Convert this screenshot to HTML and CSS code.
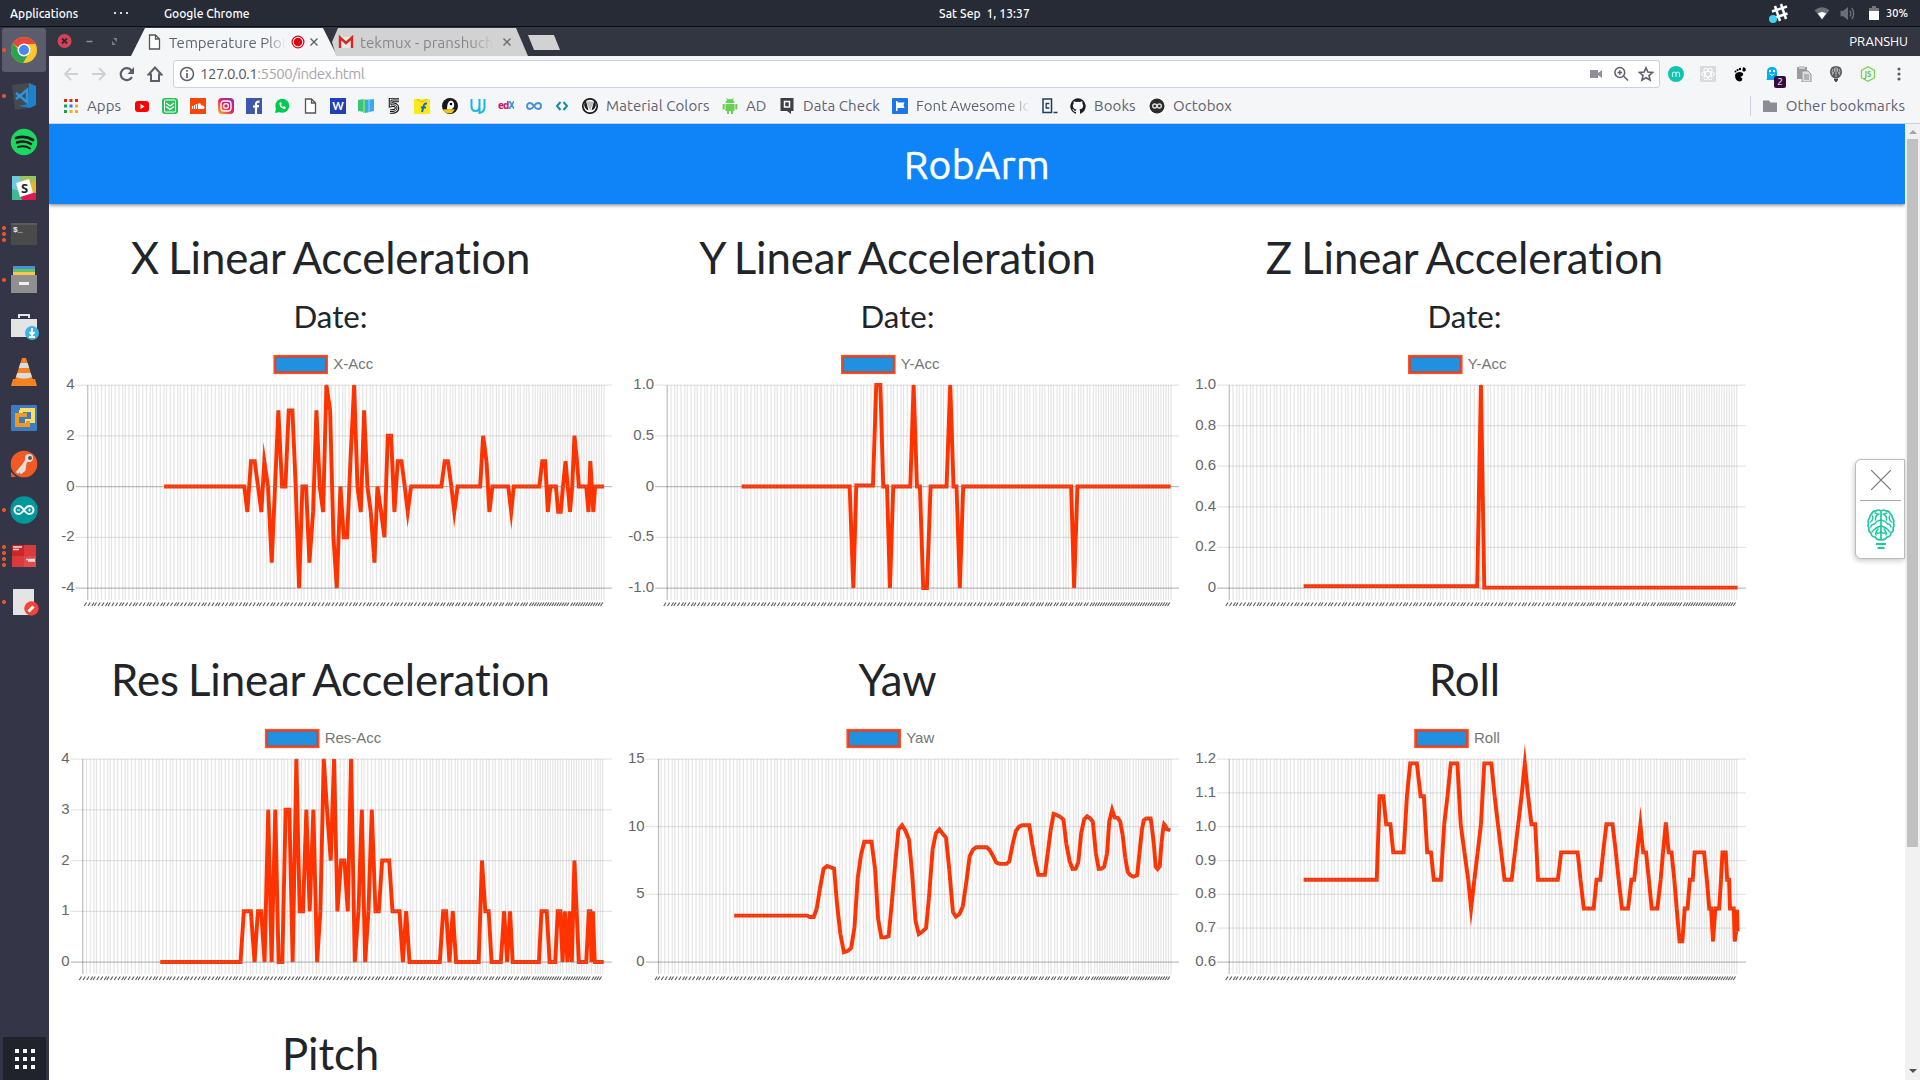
FILE: index.html
```html
<!DOCTYPE html>
<html lang="en">
<head>
<meta charset="utf-8">
<title>Temperature Plot</title>
<link rel="stylesheet" href="styles.css">
</head>
<body>
<div class="desktop">
  <header class="panel">
    <span class="panel-apps">Applications</span>
    <span class="panel-dots"><i></i><i></i><i></i></span>
    <span class="panel-app">Google Chrome</span>
    <span class="panel-clock">Sat Sep&nbsp; 1, 13:37</span>
    <div class="panel-tray">
      <svg class="tray-slack" viewBox="0 0 20 20"><g stroke="#fff" stroke-width="2.500"><path d="M6 3l5 15M12 1l5 15M3 8.500l15-5M3.500 15.500l15-5"/></g><circle cx="4" cy="16" r="4" fill="#3fd4f4"/></svg>
      <svg class="tray-wifi" viewBox="0 0 16 14"><path d="M0 3.500Q8-3 16 3.500L8 14z" fill="#6c6f78"/><path d="M3.500 7Q8 3.500 12.500 7L8 13z" fill="#fff"/></svg>
      <svg class="tray-volume" viewBox="0 0 16 16"><path d="M0 5h3l5-4v14l-5-4H0z" fill="#6c6f78"/><path d="M10 5q2 3 0 6M12 2q4 6 0 12" fill="none" stroke="#6c6f78" stroke-width="1.500"/></svg>
      <svg class="tray-battery" viewBox="0 0 10 14"><path d="M3 0h4v2h3v12H0V2h3z" fill="#74777f"/><path d="M0 5h10v9H0z" fill="#fff"/></svg>
      <span class="tray-percent">30%</span>
    </div>
  </header>

  <aside class="dock">
    <div class="dock-item active one"><svg viewBox="0 0 32 32"><circle cx="16" cy="16" r="13" fill="#fbc52d"/><path d="M16 16L4.500 9.900A13 13 0 0 1 27.500 9.900H16z" fill="#e5483b"/><path d="M16 16h-4.500L4.600 9.700A13 13 0 0 0 15 29l6-10z" fill="#2ba24c"/><circle cx="16" cy="16" r="6.500" fill="#fff"/><circle cx="16" cy="16" r="5" fill="#4586f3"/></svg></div>
    <div class="dock-item one"><svg viewBox="0 0 32 32"><path d="M4 5l17-2 7 3v19l-6 3-15 2z" fill="#444a50"/><path d="M21 3l7 3v19l-6 3-11-2 9-2z" fill="#1b82cf"/><path d="M8 13l11 9V10L8 19" fill="none" stroke="#2d93dc" stroke-width="2.500"/></svg></div>
    <div class="dock-item"><svg viewBox="0 0 32 32"><circle cx="16" cy="16" r="13.200" fill="#1ed760"/><g fill="none" stroke="#191b20" stroke-linecap="round"><path d="M8 12q9-3 17 2" stroke-width="2.800"/><path d="M9 16.500q8-2.500 14 1.500" stroke-width="2.400"/><path d="M10 21q7-2 12 1.500" stroke-width="2"/></g></svg></div>
    <div class="dock-item"><svg viewBox="0 0 32 32"><path d="M4 4h8l4 12-12 5z" fill="#6ecadc"/><path d="M12 4h16v7l-14 5z" fill="#9bc25b"/><path d="M28 9v15l-7-1-3-11z" fill="#e9b32a"/><path d="M28 21v7H13l2-8z" fill="#de1a53"/><path d="M4 17l8 2 2 9H4z" fill="#3eb991"/><path d="M8 11l13-4 4 14-13 4z" fill="#fff"/><text x="16.500" y="21" class="ic-s">S</text></svg></div>
    <div class="dock-item three"><svg viewBox="0 0 32 32"><path d="M3 5h26v22H3z" fill="#4a4a4a"/><path d="M3 5h26v2H3z" fill="#5b5b5b"/><text x="5" y="14" class="ic-term">$_</text></svg></div>
    <div class="dock-item one"><svg viewBox="0 0 32 32"><path d="M5 2h22v4H5z" fill="#4d8fd6"/><path d="M5 5h22v4H5z" fill="#5fc36e"/><path d="M5 8h22v4H5z" fill="#fac64b"/><path d="M3 11h26v18H3z" fill="#8f8f8f"/><path d="M11 18h10v3H11z" fill="#eee"/></svg></div>
    <div class="dock-item"><svg viewBox="0 0 32 32"><path d="M11 8V5h10v3" fill="none" stroke="#e6e6e6" stroke-width="2"/><path d="M3 9h26v18H3z" fill="#e4e4e4"/><circle cx="24" cy="23" r="7" fill="#3fb0e8"/><path d="M24 18v6M21.500 22l2.500 3 2.500-3M21 27h6" fill="none" stroke="#fff" stroke-width="1.800"/></svg></div>
    <div class="dock-item"><svg viewBox="0 0 32 32"><path d="M5 23h22l2 7H3z" fill="#f58220"/><path d="M14 2h4l7 22q-9 4-18 0z" fill="#f58220"/><path d="M12.400 7h7.200l1.600 5H10.800zM9.300 17h13.400l1.200 4q-8 3-16 0z" fill="#d8dde0"/></svg></div>
    <div class="dock-item"><svg viewBox="0 0 32 32"><rect x="3" y="3" width="26" height="26" rx="1" fill="#3d7cc0"/><path d="M12 8h13v11h-8M13 12V8" fill="none" stroke="#fadf66" stroke-width="4"/><path d="M19 13H9v10h11v-4" fill="none" stroke="#f39a1d" stroke-width="4"/></svg></div>
    <div class="dock-item"><svg viewBox="0 0 32 32"><circle cx="16" cy="16" r="13.300" fill="#f15a24"/><path d="M3 24v5h5z" fill="#f15a24"/><circle cx="21" cy="10" r="4" fill="#ddd"/><circle cx="22" cy="10" r="2" fill="#555"/><path d="M19 12l-5 7-5 6M17 15l-1 7-4 3" fill="none" stroke="#e8e0dc" stroke-width="3"/></svg></div>
    <div class="dock-item one"><svg viewBox="0 0 32 32"><circle cx="16" cy="16" r="13.700" fill="#00979d"/><g fill="none" stroke="#fff" stroke-width="2"><path d="M16 16q-3-4-5.500-4a4 4 0 0 0 0 8q2.500 0 5.500-4t5.500-4a4 4 0 0 1 0 8q-2.500 0-5.500-4z"/><path d="M9 16h3M20 16h3M21.500 14.500v3" stroke-width="1.200"/></g></svg></div>
    <div class="dock-item four"><svg viewBox="0 0 32 32"><path d="M4 5h24v22H4z" fill="#d93a3a"/><path d="M4 5h12v11H4z" fill="#cc2429"/><path d="M16 16h12v11H16z" fill="#e04a4a"/><path d="M5 7h9M5 9.500h6M18 19.500h9M20 21h7" stroke="#f4d9d9" stroke-width="1.400"/></svg></div>
    <div class="dock-item one"><svg viewBox="0 0 32 32"><path d="M5 3h21v26H5z" fill="#e4e4e4"/><circle cx="23.500" cy="22.500" r="7.200" fill="#f04437"/><path d="M20.500 25.500l5-5" stroke="#fff" stroke-width="3"/></svg></div>
    <div class="dock-grid"><svg viewBox="0 0 20 20" fill="#fff"><path d="M0 0h4v4H0zM8 0h4v4H8zM16 0h4v4h-4zM0 8h4v4H0zM8 8h4v4H8zM16 8h4v4h-4zM0 16h4v4H0zM8 16h4v4H8zM16 16h4v4h-4z"/></svg></div>
  </aside>

  <main class="browser">
    <div class="tabstrip">
      <div class="window-buttons">
        <svg viewBox="0 0 70 16"><circle cx="7.500" cy="8" r="7" fill="#d9415a"/><path d="M5 5.500l5 5M10 5.500l-5 5" stroke="#3a2630" stroke-width="1.800"/><path d="M29.500 8.500h6" stroke="#878a94" stroke-width="1.600"/><path d="M55 8v4h4zM56 5h4v4z" fill="#787b86"/></svg>
      </div>
      <div class="tab tab-active">
        <svg class="tab-icon" viewBox="0 0 16 16"><path d="M3.500 1h6l4 4v10h-10zM9.500 1v4h4" fill="#fff" stroke="#555" stroke-width="1.300"/></svg>
        <span class="tab-title">Temperature Plot</span>
        <svg class="tab-rec" viewBox="0 0 14 14"><circle cx="7" cy="7" r="5.900" fill="none" stroke="#d80a16" stroke-width="1.200"/><circle cx="7" cy="7" r="4.300" fill="#d80a16"/></svg>
        <svg class="tab-close" viewBox="0 0 8 8"><path d="M.5.500l7 7M7.500.500l-7 7" stroke="#5f6368" stroke-width="1.400"/></svg>
      </div>
      <div class="tab tab-second">
        <svg class="tab-icon" viewBox="0 0 16 16"><path d="M1 3h14v11H1z" fill="#e7e7e7"/><path d="M2 14V3.500l6 5.500 6-5.500V14" fill="none" stroke="#d5291f" stroke-width="2.400"/></svg>
        <span class="tab-title">tekmux - pranshuch</span>
        <svg class="tab-close" viewBox="0 0 8 8"><path d="M.5.500l7 7M7.500.500l-7 7" stroke="#6b6b6f" stroke-width="1.400"/></svg>
      </div>
      <div class="new-tab"></div>
      <span class="profile">PRANSHU</span>
    </div>

    <div class="toolbar">
      <svg class="nav" viewBox="0 0 16 16"><path d="M15 8H2M8 2L2 8l6 6" fill="none" stroke="#cfd0d3" stroke-width="1.800"/></svg>
      <svg class="nav" viewBox="0 0 16 16"><path d="M1 8h13M8 2l6 6-6 6" fill="none" stroke="#cfd0d3" stroke-width="1.800"/></svg>
      <svg class="nav" viewBox="0 0 16 16"><path d="M13 11a6 6 0 1 1-.5-6.500" fill="none" stroke="#5c5f6b" stroke-width="2.200"/><path d="M15 1v7H8.500z" fill="#5c5f6b"/></svg>
      <svg class="nav" viewBox="0 0 16 16"><path d="M8 1.500L1.500 8.500H4V15h8V8.500h2.500z" fill="none" stroke="#5c5f6b" stroke-width="2"/></svg>
      <div class="omnibox">
        <svg class="info" viewBox="0 0 16 16"><circle cx="8" cy="8" r="6.500" fill="none" stroke="#5c5f6b" stroke-width="1.500"/><path d="M8 7v5M8 4v1.800" stroke="#5c5f6b" stroke-width="1.700"/></svg>
        <span class="url"><b>127.0.0.1</b>:5500/index.html</span>
        <svg class="box-icon" viewBox="0 0 16 16"><path d="M2 4h8v8H2zM10 7l4-3v8l-4-3z" fill="#8c8f9c"/></svg>
        <svg class="box-icon" viewBox="0 0 16 16"><circle cx="6.800" cy="6.500" r="4.900" fill="none" stroke="#5c5f6b" stroke-width="1.500"/><path d="M4.500 6.500h4.600M6.800 4.200v4.600M10.500 10l4.500 4.500" stroke="#5c5f6b" stroke-width="1.500"/></svg>
        <svg class="box-icon" viewBox="0 0 16 16"><path d="M8 1.800l1.900 4.300 4.600.4-3.500 3.100 1.100 4.600L8 11.800l-4.100 2.400L5 9.600 1.500 6.500l4.600-.4z" fill="none" stroke="#5c5f6b" stroke-width="1.600"/></svg>
      </div>
      <div class="extensions">
        <svg viewBox="0 0 16 16"><circle cx="8" cy="8" r="8" fill="#10c4ae"/><path d="M4.500 11V6.500M4.500 8q0-2 1.700-2T8 8v3M8 8q0-2 1.700-2T11.500 8v3" fill="none" stroke="#d9f7f2" stroke-width="1.100"/></svg>
        <svg viewBox="0 0 16 16"><path d="M0 0h16v16H0z" fill="#d9dadb"/><g fill="none" stroke="#fff"><ellipse cx="8" cy="8" rx="6.500" ry="2.500"/><ellipse cx="8" cy="8" rx="6.500" ry="2.500" transform="rotate(60 8 8)"/><ellipse cx="8" cy="8" rx="6.500" ry="2.500" transform="rotate(120 8 8)"/></g></svg>
        <svg viewBox="0 0 16 16"><path d="M11.500 1q3 1 2 4-3 1.500-3-1 0-2 1-3z"/><circle cx="8" cy="3" r="1.200"/><circle cx="5.600" cy="4" r="1.100"/><circle cx="3.500" cy="5.500" r="1"/><path d="M3 9q1-3 5-3 4 .5 3 3-1 2-2.500 1.500 0 1 1.500 1.500 1 3-2 3.500Q3 15 3 9z"/></svg>
        <span class="ghost"><svg viewBox="0 0 16 16"><path d="M3 13V6q0-5 5-5t5 5v6l2 2H2z" fill="#00aef0"/><circle cx="6" cy="5" r="1.200" fill="#fff"/><circle cx="10" cy="5" r="1.200" fill="#fff"/><path d="M5.500 8q2.500 2.500 5 0" stroke="#fff" fill="none"/></svg><span class="badge">2</span></span>
        <svg viewBox="0 0 16 16"><path d="M1 1h10v12H1z" fill="#9b9b9b"/><path d="M3 0h6v3H3z" fill="#ccc"/><path d="M6 5h6l3 3v8H6z" fill="#ddd" stroke="#999"/><path d="M8 9h5M8 11h5M8 13h5" stroke="#888"/></svg>
        <svg viewBox="0 0 16 16"><path d="M8 0q6 0 6 6 0 3.500-3.500 6H5.500Q2 9.500 2 6q0-6 6-6z" fill="#5b5b5b"/><path d="M8 1v10M5 3q-2 3 0 5M11 3q2 3 0 5M6.500 2v3L4 9M9.500 2v3L12 9" stroke="#ccc" fill="none" stroke-width=".8"/><path d="M6 12.500h4v1.500L8.500 16h-1L6 14z" fill="#444"/></svg>
        <svg viewBox="0 0 16 16"><path d="M8 .7l6.500 3.700v7.300L8 15.300l-6.500-3.600V4.400z" fill="#f5f6f8" stroke="#7fd04b" stroke-width="1.300"/><text x="8" y="11" class="ic-js">JS</text></svg>
        <svg class="menu-dots" viewBox="0 0 4 16" fill="#5c5f6b"><circle cx="2" cy="3" r="1.600"/><circle cx="2" cy="8" r="1.600"/><circle cx="2" cy="13" r="1.600"/></svg>
      </div>
    </div>

    <nav class="bookmarks">
      <svg class="apps-icon" viewBox="0 0 16 16"><path d="M1 1h3v3H1zM6.500 1h3v3h-3zM12 1h3v3h-3z" fill="#e2231a"/><path d="M1 6.500h3v3H1zM1 12h3v3H1z" fill="#12a05c"/><path d="M6.500 6.500h3v3h-3z" fill="#2a7af3"/><path d="M12 6.500h3v3h-3zM6.500 12h3v3h-3zM12 12h3v3h-3z" fill="#f9ad1b"/></svg>
      <span class="label w-apps">Apps</span>
      <svg viewBox="0 0 16 16"><rect x="1" y="3" width="14" height="11" rx="3" fill="#f00"/><path d="M6.500 6v5l4-2.500z" fill="#fff"/></svg>
      <svg viewBox="0 0 16 16"><rect width="16" height="16" rx="3" fill="#2bc15a"/><rect x="2.500" y="2" width="11" height="12" rx="1" fill="none" stroke="#fff"/><path d="M4 5l4 3 4-3M4 8.500l4 3 4-3" fill="none" stroke="#fff" stroke-width="1.300"/></svg>
      <svg viewBox="0 0 16 16"><path d="M0 0h16v16H0z" fill="#fd4505"/><path d="M2.500 8v3M4.500 7v4M6.500 6v5" stroke="#fff" stroke-width="1.200"/><path d="M8 5.500q3-1 3.500 2 3-.5 3 2 0 1.500-1.500 1.500H8z" fill="#fff"/></svg>
      <svg viewBox="0 0 16 16"><defs><linearGradient id="insta" x1="0" y1="1" x2="1" y2="0"><stop offset="0" stop-color="#fdb72e"/><stop offset=".5" stop-color="#ee1c5d"/><stop offset="1" stop-color="#7a2fd0"/></linearGradient></defs><rect width="16" height="16" rx="4" fill="url(#insta)"/><rect x="3" y="3" width="10" height="10" rx="3" fill="none" stroke="#fff" stroke-width="1.300"/><circle cx="8" cy="8" r="2.400" fill="none" stroke="#fff" stroke-width="1.300"/></svg>
      <svg viewBox="0 0 16 16"><path d="M0 0h16v16H0z" fill="#4056a8"/><path d="M10 16V8h3M7 8.500h5.500M10 9V6q0-2.500 3.500-2.300" fill="none" stroke="#fff" stroke-width="2.200"/></svg>
      <svg viewBox="0 0 16 16"><circle cx="8.300" cy="7.700" r="7" fill="#00c853"/><path d="M1 15l1-5 4 4z" fill="#00c853"/><path d="M5.500 5q-.5 5 5.500 6l1-1.500-2-1.300-1 .8q-1.500-.8-2-2l.8-1L7 4z" fill="#fff"/></svg>
      <svg viewBox="0 0 16 16"><path d="M3.500 1h6l4 4v10h-10zM9.500 1v4h4" fill="#fff" stroke="#555" stroke-width="1.300"/></svg>
      <svg viewBox="0 0 16 16"><path d="M0 0h16v16H0z" fill="#2140b8"/><text x="8" y="12" class="ic-w">W</text></svg>
      <svg viewBox="0 0 16 16"><path d="M0 2l6-1v13l-6-1z" fill="#3cc47c"/><path d="M5 1l6 1v12l-6 1z" fill="#6fe06a"/><path d="M7 2l9-1v12l-9 2z" fill="#3fa8ec"/><path d="M11 2v12" stroke="#8fd0f8"/></svg>
      <svg viewBox="0 0 16 16"><path d="M13 2H5v5q6-1 6 3t-7 3.500" fill="none" stroke="#111" stroke-width="4.500"/><path d="M13 2H5v5q6-1 6 3t-7 3.500" fill="none" stroke="#fff" stroke-width="2.400"/><path d="M13 2H5v5q6-1 6 3t-7 3.500" fill="none" stroke="#111" stroke-width="1"/></svg>
      <svg viewBox="0 0 16 16"><path d="M0 1h16v15H0z" fill="#ffe81a"/><path d="M8 14l2-7q.8-2 3-1.500M7 9.500h5" fill="none" stroke="#1769c9" stroke-width="2"/><path d="M3 1q5 5 10 0" fill="none" stroke="#d9b800"/></svg>
      <svg viewBox="0 0 16 16"><circle cx="8" cy="8" r="8" fill="#171717"/><path d="M5 11q0-8 4-8.500 4 1 3 6.500l-2 2z" fill="#fff"/><path d="M1 11.500q7-1 12 0l-3 3.500q-7 1.500-9-3.500z" fill="#f0c417"/><circle cx="9" cy="6" r="1.300"/></svg>
      <svg viewBox="0 0 16 16"><path d="M1.500 1v7q0 5 4 5t4-5V1M9.500 1v14q5-1 5-6V1" fill="none" stroke="#19b5ea" stroke-width="2"/></svg>
      <svg viewBox="0 0 16 16"><text x="0" y="11" class="ic-edx">ed<tspan fill="#1d9cd3">X</tspan></text></svg>
      <svg viewBox="0 0 16 16"><path d="M8 8Q6 5 4 5a3 3 0 0 0 0 6q2 0 4-3t4-3a3 3 0 0 1 0 6q-2 0-4-3z" fill="none" stroke="#4a90d9" stroke-width="1.900"/></svg>
      <svg viewBox="0 0 16 16"><path d="M6.500 4L3 8l3.500 4M9.500 4L13 8l-3.500 4" fill="none" stroke="#108fa3" stroke-width="2"/></svg>
      <svg viewBox="0 0 16 16"><circle cx="8" cy="8" r="7.200" fill="#fff" stroke="#1f1f1f" stroke-width="1.700"/><path d="M2.500 3h1.500l2.500 9.500Q1 11 2.500 3zM13.500 3H12l-2.500 9.500Q15 11 13.500 3z" fill="#1f1f1f"/><path d="M4 3.500h8l-4 9z" fill="#bdbdbd"/></svg>
      <span class="label w-material">Material Colors</span>
      <svg viewBox="0 0 16 16" fill="#67d153"><path d="M3.500 5a4.500 4 0 0 1 9 0zM3.500 6h9v7h-1.500v3H9v-3H7v3H5v-3H3.500zM.7 6h2v5.500h-2zM13.300 6h2v5.500h-2z"/><path d="M4.500 0l2 2.500M11.500 0l-2 2.500" stroke="#67d153"/></svg>
      <span class="label w-ad">AD</span>
      <svg viewBox="0 0 16 16"><path d="M1.500 0h13v13H12v3l-4-3H1.500z" fill="#3d4045"/><path d="M5.500 3.500h5v5.500h-5z" fill="none" stroke="#fff" stroke-width="1.500"/></svg>
      <span class="label w-data">Data Check</span>
      <svg viewBox="0 0 16 16"><rect width="16" height="16" rx="1" fill="#1c76e8"/><path d="M4 3h1.500v1.500h7l-1 2.500 1 3h-7v3H4z" fill="#fff"/></svg>
      <span class="label w-font fade">Font Awesome Ic</span>
      <svg viewBox="0 0 16 16"><path d="M1 1h8.500v13.500H1z" fill="none" stroke="#1d3f57" stroke-width="1.500"/><path d="M7.300 5.500H4.200v4.500h3.100" fill="none" stroke="#1d3f57" stroke-width="1.300"/><path d="M11.500 14.500h4" stroke="#1d3f57" stroke-width="1.500"/></svg>
      <svg viewBox="0 0 16 16"><path d="M8 .2a8 8 0 0 0-2.500 15.500c.4.100.5-.2.500-.4v-1.500c-2 .5-2.600-1-2.600-1-.4-.9-.9-1.200-.9-1.200-.7-.5.100-.5.100-.5.800.1 1.200.8 1.200.8.700 1.200 1.900.9 2.300.7.100-.5.300-.9.500-1.100-1.800-.2-3.700-.9-3.700-4 0-.9.400-1.600.9-2.100-.1-.3-.4-1.100 0-2.200 0 0 .7-.2 2.200.8a8 8 0 0 1 4 0c1.500-1 2.200-.8 2.200-.8.400 1.100.2 1.900.1 2.200.5.500.8 1.200.8 2.100 0 3.100-1.900 3.700-3.700 4 .3.200.6.800.6 1.500v2.300c0 .2.100.5.500.4A8 8 0 0 0 8 .2z" fill="#1b1f23"/></svg>
      <span class="label w-books">Books</span>
      <svg viewBox="0 0 16 16"><path d="M0 0h16v16H0z" fill="#fff"/><circle cx="8" cy="8" r="7.500" fill="#2c2c2c"/><circle cx="5.700" cy="8" r="2" fill="none" stroke="#ddd" stroke-width="1.400"/><circle cx="10.300" cy="8" r="2" fill="none" stroke="#ddd" stroke-width="1.400"/></svg>
      <span class="label">Octobox</span>
      <span class="other"><svg viewBox="0 0 16 16"><path d="M1 2.500h6l1.500 2H15v9.500H1z" fill="#8a8d96"/></svg><span class="label">Other bookmarks</span></span>
    </nav>

    <div class="viewport">
      <div class="page">
        <div class="navbar">RobArm</div>
        <div class="charts">
          <section class="card"><h1>X Linear Acceleration</h1><h3>Date:</h3><svg class="chart" id="x-acc"></svg></section>
          <section class="card"><h1>Y Linear Acceleration</h1><h3>Date:</h3><svg class="chart" id="y-acc"></svg></section>
          <section class="card"><h1>Z Linear Acceleration</h1><h3>Date:</h3><svg class="chart" id="z-acc"></svg></section>
          <section class="card"><h1>Res Linear Acceleration</h1><svg class="chart" id="res-acc"></svg></section>
          <section class="card"><h1>Yaw</h1><svg class="chart" id="yaw"></svg></section>
          <section class="card"><h1>Roll</h1><svg class="chart" id="roll"></svg></section>
          <section class="card"><h1>Pitch</h1></section>
        </div>
      </div>
      <div class="scrollbar"><i class="up"></i><i class="thumb"></i><i class="down"></i></div>
      <div class="side-widget">
        <svg class="widget-close" viewBox="0 0 20 20"><path d="M0 0l20 20M20 0L0 20" stroke="#777" stroke-width="1.200"/></svg>
        <svg class="widget-brain" viewBox="0 0 28 40"><g fill="none" stroke="#1cc8a0" stroke-width="1.500" stroke-linecap="round"><path d="M14 2v29M14 2q-3-2-5 0-3-.5-4.500 3-2 1.500-2 4-2 2.500-1 5-1 3 .5 5-1 3.500 2 5 .5 4 4 4 2.500 4 6 2.500M14 2q3-2 5 0 3-.5 4.500 3 2 1.500 2 4 2 2.500 1 5 1 3-.5 5 1 3.500-2 5-.5 4-4 4-2.500 4-6 2.500" stroke-width="1.700"/><path d="M12 5Q8 6.500 8.500 11M14 11q-5 1-6.500 4-3 0-3.500 3M14 17q-5 1-9 6M14 22q-1.500 3.500-5 1.500M5.500 7q1 4-2 6M8 4q2 0 2.500 1.500M11 20q-3 4-2 6M16 5q4 1.500 3.500 6M14 11q5 1 6.500 4 3 0 3.500 3M14 17q5 1 9 6M14 22q1.500 3.500 5 1.500M22.500 7q-1 4 2 6M20 4q-2 0-2.500 1.500M17 20q3 4 2 6"/></g><path d="M9 34h10v2H9zM10.500 38h7v2h-7z" fill="#1cc8a0"/></svg>
      </div>
    </div>
  </main>
</div>
<script src="charts.js"></script>
</body>
</html>
```

FILE: styles.css
```css
* { box-sizing: border-box; }
body { margin: 0; background: #fff; font-family: Ubuntu, "Noto Sans", sans-serif; }
svg { display: block; flex: none; }
.desktop {
  display: grid;
  grid-template: 27px 1053px / 49px 1871px;
  width: 1920px;
  height: 1080px;
  overflow: hidden;
}

/* top panel */
.panel {
  grid-column: 1 / 3;
  display: grid;
  grid-template-columns: 104px 50px 775px auto 1fr;
  align-items: center;
  height: 27px;
  padding-left: 10px;
  background: #272b36;
  border-bottom: 1px solid #0d0e13;
  color: #fff;
  font-size: 12px;
  font-weight: 500;
  white-space: nowrap;
}
.panel-clock { letter-spacing: .1px; }
.panel-dots { display: flex; gap: 4px; }
.panel-dots i { width: 2px; height: 2px; background: #ddd; }
.panel-tray { display: flex; align-items: center; justify-content: flex-end; padding-right: 11px; }
.tray-slack { width: 20px; height: 20px; margin-right: 25px; }
.tray-wifi { width: 16px; height: 13px; margin-right: 10px; }
.tray-volume { width: 16px; height: 15px; margin-right: 13px; }
.tray-battery { width: 10px; height: 14px; margin-right: 7px; }
.tray-percent { width: 23px; font-size: 11px; }

/* dock */
.dock {
  display: flex;
  flex-direction: column;
  align-items: center;
  height: 1053px;
  background: #343647;
}
.dock-item {
  position: relative;
  display: flex;
  align-items: center;
  justify-content: center;
  width: 44px;
  height: 44px;
  margin: 1px 1px 1px 0;
  border-radius: 3px;
}
.dock-item svg { width: 32px; height: 32px; }
.dock-item.active { background: #5b5d6c; }
.dock-item::before {
  content: "";
  position: absolute;
  left: 0;
  width: 4px;
  background: radial-gradient(circle at 2px 3px, #e95420 1.700px, transparent 2.300px) 0 0 / 4px 6px;
}
.one::before { height: 6px; top: 19px; }
.three::before { height: 18px; top: 13px; }
.four::before { height: 24px; top: 10px; }
.dock-grid {
  display: grid;
  place-items: center;
  width: 43px;
  height: 43px;
  margin-top: auto;
  background: #20222c;
}
.dock-grid svg { width: 20px; height: 20px; }
.ic-s { font: bold 13px "Noto Sans", sans-serif; text-anchor: middle; fill: #222; }
.ic-term { font: bold 8px "Liberation Mono", monospace; fill: #eee; }
.ic-w { font: bold 11px Lato, sans-serif; text-anchor: middle; fill: #fff; }
.ic-edx { font: bold 10px "Noto Sans", sans-serif; letter-spacing: -1px; fill: #c2186b; }
.ic-js { font: bold 8px "Noto Sans", sans-serif; text-anchor: middle; fill: #6cc24a; }

/* tab strip */
.tabstrip {
  display: flex;
  height: 29px;
  background: #323641;
}
.window-buttons { width: 82px; padding: 6px 0 0 8px; }
.window-buttons svg { width: 70px; height: 16px; }
.tab {
  display: flex;
  align-items: center;
  height: 28px;
  margin-top: 1px;
  color: #5f6270;
  font-size: 15px;
  white-space: nowrap;
}
.tab-active {
  width: 206px;
  padding-left: 15px;
  background: #f5f6f8;
  clip-path: polygon(14px 0, 192px 0, 206px 100%, 0 100%);
}
.tab-second {
  width: 199px;
  margin-left: -6px;
  padding-left: 7px;
  background: #d2d2d2;
  color: #85868b;
  clip-path: polygon(7px 0, 185px 0, 197px 100%, 5px 100%, 1px 50%);
}
.tab-icon { width: 16px; height: 16px; margin-right: 7px; }
.tab-title { overflow: hidden; -webkit-mask-image: linear-gradient(90deg, #000 82%, transparent); mask-image: linear-gradient(90deg, #000 82%, transparent); }
.tab-active .tab-title { width: 117px; margin-right: 5px; }
.tab-second .tab-title { width: 134px; margin: 0 9px 0 -1px; letter-spacing: .1px; }
.tab-rec { width: 14px; height: 14px; margin-right: 5px; }
.tab-close { width: 8px; height: 8px; }
.new-tab { width: 32px; height: 15px; margin: 8px 0 0 -2px; background: #d2d2d2; clip-path: polygon(0 0, 26px 0, 100% 100%, 6px 100%); }
.profile { margin: 5px 12px 0 auto; color: #fff; font-size: 13px; line-height: 19px; }

/* toolbar */
.toolbar {
  display: flex;
  align-items: center;
  height: 36px;
  padding: 0 0 1px 14px;
  background: #f5f6f8;
}
.nav { width: 16px; height: 16px; margin-right: 12px; }
.omnibox {
  display: flex;
  align-items: center;
  width: 1487px;
  height: 28px;
  margin: 0 8px 0 -2px;
  padding: 0 5px;
  background: #fff;
  border: 1px solid #cdd0e4;
  border-radius: 3px;
}
.info { width: 16px; height: 16px; margin-right: 5px; }
.url { margin-right: auto; color: #a4a6ad; font-size: 15px; letter-spacing: -.51px; }
.url b { color: #54565f; font-weight: 400; }
.box-icon { width: 16px; height: 16px; margin-left: 9px; }
.extensions { display: flex; gap: 16px; }
.extensions svg { width: 16px; height: 16px; }
.extensions .menu-dots { width: 4px; margin-left: 5px; }
.ghost { position: relative; }
.badge {
  position: absolute;
  left: 10px;
  top: 10px;
  width: 12px;
  height: 12px;
  background: #3a0a3f;
  border-radius: 2px;
  color: #fff;
  font-size: 10px;
  line-height: 12px;
  text-align: center;
}

/* bookmarks */
.bookmarks {
  display: flex;
  align-items: center;
  gap: 12px;
  height: 32px;
  padding: 0 15px 4px 14px;
  background: #f5f6f8;
  border-bottom: 1px solid #cdd0e4;
  white-space: nowrap;
}
.bookmarks svg { width: 16px; height: 16px; }
.label { margin-left: -4px; color: #5f6270; font-size: 15px; line-height: 20px; letter-spacing: .1px; }
.w-apps { width: 35px; }
.w-material { width: 104px; }
.w-ad { width: 21px; }
.w-data { width: 77px; }
.w-font { width: 114px; letter-spacing: -.1px; }
.w-books { width: 43px; }
.fade { overflow: hidden; -webkit-mask-image: linear-gradient(90deg, #000 82%, transparent); mask-image: linear-gradient(90deg, #000 82%, transparent); }
.other { display: flex; gap: 12px; height: 20px; align-items: center; margin-left: auto; padding-left: 11px; border-left: 1px solid #cdd0e4; }

/* page */
.viewport { position: relative; display: flex; height: 956px; }
.page { width: 1856px; height: 956px; overflow: hidden; background: #fff; }
.navbar {
  height: 80px;
  background: #0f83f8;
  box-shadow: 0 1px 4px rgba(0, 0, 0, .55);
  color: #fff;
  font-size: 39px;
  line-height: 82px;
  letter-spacing: .4px;
  text-align: center;
  -webkit-text-stroke: .5px #fff;
}
.charts {
  display: grid;
  grid-template-columns: repeat(3, 567px);
  grid-template-rows: 422px 374px auto;
}
.card { width: 563px; font-family: Lato, sans-serif; color: #212529; text-align: center; white-space: nowrap; font-variant-ligatures: none; }
.card h1 { margin: 0; padding-top: 27px; font-size: 43.750px; font-weight: 400; line-height: 52px; word-spacing: -2px; letter-spacing: -.1px; }
.card h3 { margin: 0; padding-top: 15px; font-size: 31.250px; font-weight: 400; line-height: 36px; }
.chart { width: 563px; height: 270px; margin-top: 19px; overflow: visible; }
h3 + .chart { margin-top: 16px; }

.chart text { font: 15px "Liberation Sans", Arial, sans-serif; fill: #666; }
.chart .legend { fill: #757575; }
.tick { text-anchor: end; }
.legend-box { fill: #2090e0; stroke: #ff3300; stroke-opacity: .85; stroke-width: 2.800px; }
.grid line { stroke: #000; stroke-opacity: .1; stroke-width: 1.250px; }
.grid .axis { stroke-opacity: .25; }
.marks { stroke: #555; stroke-width: 1.100px; fill: none; }
.series { fill: none; stroke: #ff3300; stroke-width: 3.900px; stroke-miterlimit: 10; }
.dots circle { fill: #7f8bb0; fill-opacity: .8; }

.scrollbar { position: relative; width: 15px; background: #f1f1f1; }
.scrollbar i { position: absolute; }
.scrollbar .thumb { left: 2px; top: 15px; width: 11px; height: 708px; background: #c1c1c1; }
.scrollbar .up { left: 4px; top: 6px; border: 4px solid transparent; border-top: 0; border-bottom-color: #a3a3a3; }
.scrollbar .down { left: 4px; top: 945px; border: 4px solid transparent; border-bottom: 0; border-top-color: #505050; }

.side-widget {
  position: absolute;
  left: 1806px;
  top: 335px;
  display: flex;
  flex-direction: column;
  align-items: center;
  width: 50px;
  height: 100px;
  padding-left: 2px;
  background: #fff;
  border: 1px solid #bbb;
  border-radius: 6px 0 0 6px;
  box-shadow: -1px 2px 5px rgba(0, 0, 0, .2);
}
.widget-close { width: 20px; height: 20px; margin: 10px 0; }
.widget-brain { width: 28px; height: 40px; margin-top: 9px; }
.side-widget::before { content: ""; position: absolute; left: 4px; top: 40px; width: 41px; height: 1px; background: #aaa; }
```

FILE: charts.js
```js
// Small line-chart renderer: each chart lists its axis, legend and samples.
const NS = 'http://www.w3.org/2000/svg';
const TOP = 35, BOTTOM = 238;
const A = 0.843, B = 0.924, C = 1.007, D = 1.09, E = 1.187, F = 0.758, G = 0.661;

const charts = {
  'x-acc': {
    label: 'X-Acc', legend: 226.700, left: 39, right: 555, domain: [102, 1498], step: 9.3,
    y: [-4, 4], ticks: [['4', 4], ['2', 2], ['0', 0], ['-2', -2], ['-4', -4]],
    points: [308,0,525,0,533,-1,543,1,553,1,562,0,571,-1,579,1,589,0,599,-3,608,0,617,3,627,0,636,0,645,3,655,3,664,0,673,-4,682,0,692,0,701,-3,711,-1,720,3,729,0,738,-1,747,4,757,3,766,-2,775,-4,785,0,794,-2,803,-2,812,1,822,4,831,0,840,-1,849,3,858,0,867,-1,877,-3,885,0,895,-1,904,-2,913,2,922,2,931,-1,940,1,950,1,959,0,967,-1,976,0,1058,0,1067,1,1076,1,1085,0,1093,-1,1102,0,1163,0,1171,2,1180,1,1188,-1,1196,0,1239,0,1247,-1,1254,0,1323,0,1331,1,1339,1,1346,-1,1353,0,1368,0,1374,-1,1381,-1,1387,0,1394,1,1400,0,1406,-1,1412,0,1418,2,1425,1,1430,0,1450,0,1456,-1,1461,1,1469,-1,1474,0,1498,0]
  },
  'y-acc': {
    label: 'Y-Acc', legend: 227.300, left: 51.700, right: 555, domain: [156, 1517], step: 9,
    y: [-1, 1], ticks: [['1.0', 1], ['0.5', .5], ['0', 0], ['-0.5', -.5], ['-1.0', -1]],
    points: [356,0,648,0,658,-1,666,.01,711,.01,720,1,731,1,739,0,749,0,757,-1,766,0,812,0,821,1,830,0,838,0,847,-1,857,-1,867,0,910,0,920,1,929,0,937,0,946,-1,955,0,1247,0,1255,-1,1264,0,1516,0]
  },
  'z-acc': {
    label: 'Y-Acc', legend: 227.300, left: 46.600, right: 555, domain: [105, 1183], step: 7.2,
    y: [0, 1], ticks: [['1.0', 1], ['0.8', .8], ['0.6', .6], ['0.4', .4], ['0.2', .2], ['0', 0]],
    points: [262,.009,630,.009,638,1,645,.002,1182,.002]
  },
  'res-acc': {
    label: 'Res-Acc', legend: 218.200, left: 34, right: 555, domain: [89, 1498], step: 9.4,
    y: [0, 4], ticks: [['4', 4], ['3', 3], ['2', 2], ['1', 1], ['0', 0]],
    points: [298,0,515,0,524,1,543,1,553,0,562,1,571,1,580,0,590,3,599,0,609,3,618,0,628,0,637,3,647,3,656,0,666,4,675,1,684,1,693,3,702,1,712,3,722,0,731,1,740,4,749,3,759,2,768,4,777,1,787,2,796,2,805,1,814,4,824,0,834,1,843,3,852,0,861,1,870,3,880,1,889,1,898,2,917,2,926,1,945,1,954,0,963,1,972,0,1054,0,1063,1,1071,1,1080,0,1089,1,1098,0,1159,0,1168,2,1177,1,1186,1,1194,0,1219,0,1228,1,1236,0,1244,1,1251,0,1322,0,1329,1,1343,1,1351,0,1366,0,1373,1,1380,1,1386,0,1392,1,1399,0,1405,1,1411,0,1418,2,1424,1,1430,0,1450,0,1457,1,1461,1,1464,0,1468,1,1473,0,1497,0]
  },
  'yaw': {
    label: 'Yaw', legend: 232.700, left: 42.200, right: 555, domain: [105, 1516], step: 9.4,
    y: [0, 15], ticks: [['15', 15], ['10', 10], ['5', 5], ['0', 0]],
    points: [314,3.43,515,3.43,522,3.33,533,3.33,541,3.92,550,5.4,560,6.88,570,7.1,589,6.9,597,4.3,606,2.1,616,.72,627,.82,636,1.04,645,2.54,654,6.2,663,7.9,672,8.88,692,8.88,702,6.8,710,3.2,719,1.82,729,1.82,739,1.9,748,4.42,757,7.25,766,9.77,776,10.1,785,9.72,795,9.05,804,6.44,813,3.03,822,2.07,832,2.25,842,2.5,850,4.76,860,8.3,869,9.5,879,9.8,888,9.47,897,9.18,906,6.8,916,3.7,924,3.35,934,3.55,943,4.1,952,5.75,962,7.8,971,8.3,980,8.48,1009,8.48,1017,8.27,1026,7.85,1035,7.35,1044,7.25,1063,7.25,1071,7.43,1080,8.66,1089,9.67,1098,10,1107,10.1,1126,10.1,1134,8.73,1142,7.55,1151,6.44,1169,6.44,1177,8.07,1185,9.75,1193,10.95,1202,10.86,1211,10.73,1220,10.53,1228,8.73,1237,7.45,1245,6.88,1254,6.9,1261,7.38,1269,9.55,1277,10.53,1285,10.76,1294,10.6,1301,10.36,1309,8.07,1317,6.88,1325,6.9,1332,7.03,1340,8,1346,10.36,1354,11.25,1361,10.68,1369,10.66,1376,10.4,1383,9.38,1390,7.72,1397,6.66,1404,6.41,1413,6.3,1423,6.41,1429,8,1436,9.77,1441,10.46,1448,10.6,1460,10.6,1464,9.85,1469,8.64,1474,7.03,1479,6.88,1485,7.08,1490,8.83,1494,9.77,1497,10.17,1502,10,1504,9.82,1514,9.75]
  },
  'roll': {
    label: 'Roll', legend: 233.500, left: 46.600, right: 555, domain: [105, 1183], step: 7.2,
    y: [.6, 1.2], ticks: [['1.2', 1.2], ['1.1', 1.1], ['1.0', 1], ['0.9', .9], ['0.8', .8], ['0.7', .7], ['0.6', .6]],
    points: [262,A,417,A,423,D,431,D,437,C,446,C,452,B,474,B,481,D,488,E,502,E,510,D,517,D,524,B,532,B,538,A,553,A,560,C,567,D,574,E,588,E,595,C,603,B,611,A,617,F,624,A,631,B,638,C,645,E,660,E,667,D,674,C,681,B,688,A,703,A,710,B,717,C,724,D,731,E,738,D,745,C,753,C,759,A,801,A,808,B,843,B,849,A,856,F,877,F,883,A,891,A,897,B,904,C,917,C,924,B,930,A,937,F,950,F,957,A,963,A,969,B,976,C,982,B,988,B,994,A,1000,F,1012,F,1019,A,1024,B,1029.7,C,1030.4,C,1036,B,1042,B,1048,A,1053,F,1059,G,1065,G,1070,F,1076,F,1081,A,1087,A,1091,B,1111,B,1117,A,1122,F,1126,F,1130,G,1135,F,1143,F,1147,A,1150,B,1157,B,1160,A,1164,A,1166,F,1174,F,1176,G,1179,.69,1181,.754,1182,.69]
  }
};

function add(parent, name, attrs, text) {
  const el = document.createElementNS(NS, name);
  for (const key in attrs) el.setAttribute(key, attrs[key]);
  if (text) el.textContent = text;
  parent.appendChild(el);
  return el;
}

for (const id in charts) {
  const c = charts[id];
  const svg = document.getElementById(id);
  const [d0, d1] = c.domain;
  const px = v => c.left + (v - d0) / (d1 - d0) * (c.right - c.left);
  const py = v => BOTTOM - (v - c.y[0]) / (c.y[1] - c.y[0]) * (BOTTOM - TOP);

  add(svg, 'rect', { class: 'legend-box', x: c.legend - .9, y: 6.3, width: 51.8, height: 16.4 });
  add(svg, 'text', { class: 'legend', x: c.legend + 57.5, y: 19 }, c.label);

  const grid = add(svg, 'g', { class: 'grid' });
  for (const [text, v] of c.ticks) {
    add(grid, 'line', { x1: c.left - 12.5, x2: 563, y1: py(v), y2: py(v), class: v === 0 || v === c.y[0] ? 'axis' : '' });
    add(svg, 'text', { class: 'tick', x: c.left - 13.5, y: py(v) + 4 }, text);
  }
  // Samples get denser towards the newest readings on the right.
  // Grid lines snap to 1.25px steps, the size of one zoomed pixel.
  let marks = '';
  for (let v = d0; v <= d1 + 1;) {
    const x = Math.round(px(v) / 1.25) * 1.25;
    add(grid, 'line', { x1: x, x2: x, y1: TOP, y2: BOTTOM + 12, class: v === d0 ? 'axis' : '' });
    marks += `M${x - 3.5} 256l2.300 -3.500`;
    const part = (v - d0) / (d1 - d0);
    v += c.step * (part < .65 ? 1 : part < .85 ? .9 : .75);
  }
  add(svg, 'path', { class: 'marks', d: marks });

  let d = '';
  const dots = [];
  for (let i = 0; i < c.points.length; i += 2) {
    const [v, y] = [c.points[i], c.points[i + 1]];
    d += (i ? 'L' : 'M') + px(v) + ' ' + py(y);
    if (i) {
      const [v0, y0] = [c.points[i - 2], c.points[i - 1]];
      const n = Math.max(1, Math.round((v - v0) / c.step));
      for (let k = 1; k <= n; k++) dots.push([v0 + (v - v0) * k / n, y0 + (y - y0) * k / n]);
    }
  }
  add(svg, 'path', { class: 'series', d });
  const g = add(svg, 'g', { class: 'dots' });
  for (const [v, y] of dots) add(g, 'circle', { cx: px(v), cy: py(y), r: .7 });
}
```
